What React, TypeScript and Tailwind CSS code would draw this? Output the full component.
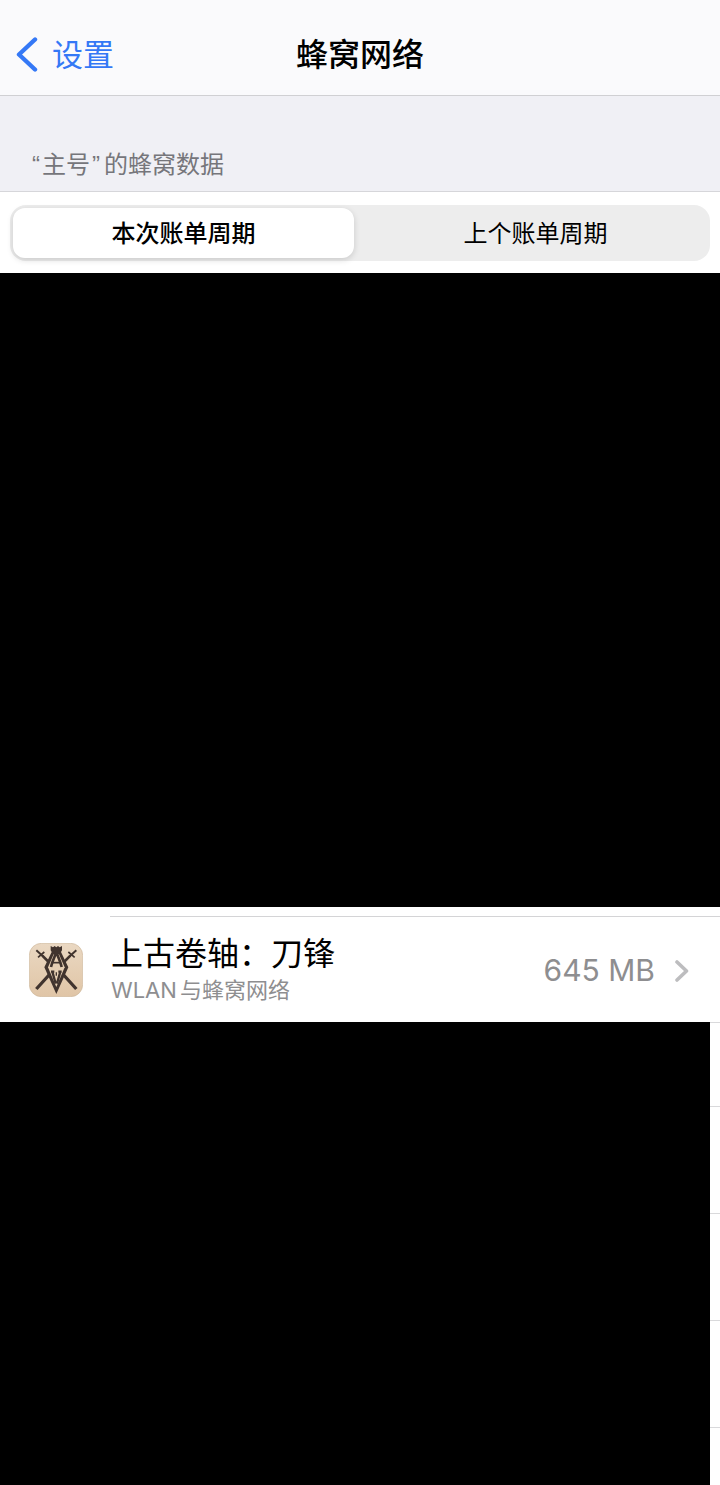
import { useState } from "react";

const PERIODS = ["本次账单周期", "上个账单周期"];

function BackChevron() {
  return (
    <svg
      className="w-6 h-9"
      viewBox="0 0 24 36"
      fill="none"
      stroke="currentColor"
      strokeWidth="4.4"
      strokeLinecap="round"
      strokeLinejoin="round"
    >
      <path d="M19 2.5 3 17.5 19 32.5" />
    </svg>
  );
}

function RowChevron() {
  return (
    <svg
      className="w-4 h-6 text-[#bdbdbf]"
      viewBox="0 0 16 24"
      fill="none"
      stroke="currentColor"
      strokeWidth="3.6"
      strokeLinecap="round"
      strokeLinejoin="round"
    >
      <path d="M3 4 12.5 13 3 22" />
    </svg>
  );
}

function BladesIcon() {
  return (
    <svg
      className="w-[54px] h-[54px] shrink-0"
      viewBox="0 0 162 162"
      fill="none"
      stroke="#41342e"
    >
      <defs>
        <linearGradient id="parchment" x1="0" y1="0" x2="0" y2="1">
          <stop offset="0" stopColor="#ead8c2" />
          <stop offset="1" stopColor="#e0c5a6" />
        </linearGradient>
      </defs>
      <rect
        x="1"
        y="1"
        width="160"
        height="160"
        rx="36"
        fill="url(#parchment)"
        stroke="#cfb99f"
        strokeWidth="2"
      />
      {/* crossed swords */}
      <path d="M22 22 42 40M142 22 122 40" strokeWidth="6" />
      <path d="M27 43 46 27M137 43 118 27" strokeWidth="5" />
      <path d="M40 38 62 60M124 38 102 60" strokeWidth="8" />
      <path d="M60 96 22 138M104 96 142 138" strokeWidth="10" />
      {/* emblem */}
      <path
        d="M65 9l7 4 5-4 5 4 5-4 5 4 7-4v13l-3 5 22 46-36 80-36-80 22-46-3-5z"
        fill="#41342e"
        stroke="none"
      />
      <path
        d="M74 34 57 73 82 132 107 73 90 34z"
        fill="#e6cfb3"
        stroke="none"
      />
      <path d="M82 28 70 58 66 72M82 28 94 58 98 72" strokeWidth="8" />
      <path d="M70 59h24" strokeWidth="5" />
      <path d="M66 86h10M88 86h10M70 86 80 122M94 86 84 122" strokeWidth="7" />
      <path d="M82 88v10" strokeWidth="4" />
    </svg>
  );
}

export default function App() {
  const [period, setPeriod] = useState(0);

  return (
    <div className="min-h-screen flex flex-col bg-white text-black font-['Inter','Noto_Sans_CJK_SC',sans-serif]">
      <header className="grid grid-cols-[1fr_auto_1fr] items-center h-24 pt-[14px] px-4 bg-[#fafafc] border-b border-[#d0d0d3]">
        <button className="flex items-center gap-3 justify-self-start text-[#3478f6] text-[31px] leading-10">
          <BackChevron />
          设置
        </button>
        <h1 className="text-[32px] leading-10 font-medium">蜂窝网络</h1>
      </header>

      <main className="grow flex flex-col">
        <h2 className="flex items-end h-24 px-8 pb-2 bg-[#f0f0f5] border-b border-[#d6d6da] text-2xl leading-9 text-[#76767b] font-['Liberation_Sans','Noto_Sans_CJK_SC',sans-serif]">
          <span>“</span>
          <span className="mx-0.5">主号</span>
          <span className="mr-1">”</span>
          <span>的蜂窝数据</span>
        </h2>

        <div className="px-[10px] pt-[13px] pb-3">
          <div className="grid grid-cols-2 p-[3px] rounded-2xl bg-[#ededed]">
            {PERIODS.map((label, index) => (
              <button
                key={label}
                aria-pressed={period === index}
                onClick={() => setPeriod(index)}
                className={
                  "h-[50px] pt-0.5 rounded-xl text-2xl" +
                  (period === index
                    ? " mr-1.5 bg-white font-medium shadow-[0_2px_6px_rgba(0,0,0,0.15)]"
                    : " pl-1")
                }
              >
                {label}
              </button>
            ))}
          </div>
        </div>

        <div className="h-[634px] bg-black" />

        <section>
          <div className="mt-[9px] ml-[110px] h-px bg-[#d4d4d6]" />
          <a href="#app" className="flex items-center h-[105px] pl-[29px] pr-[30px]">
            <BladesIcon />
            <div className="ml-7 grow">
              <div className="text-[32px] leading-10">上古卷轴：刀锋</div>
              <div className="flex gap-[3px] text-[22px] leading-8 text-[#8e8e90]">
                <span>WLAN</span>
                <span>与蜂窝网络</span>
              </div>
            </div>
            <span className="mr-[19px] text-[30px] leading-10 text-[#8e8e90]">
              645 MB
            </span>
            <RowChevron />
          </a>
        </section>

        <div className="grow flex">
          <div className="grow bg-black" />
          <div className="w-[10px] flex flex-col border-t border-[#d9d9db]">
            <div className="h-[84px] border-b border-[#d9d9db]" />
            <div className="h-[107px] border-b border-[#d9d9db]" />
            <div className="h-[107px] border-b border-[#d9d9db]" />
            <div className="h-[107px] border-b border-[#d9d9db]" />
          </div>
        </div>
      </main>
    </div>
  );
}
